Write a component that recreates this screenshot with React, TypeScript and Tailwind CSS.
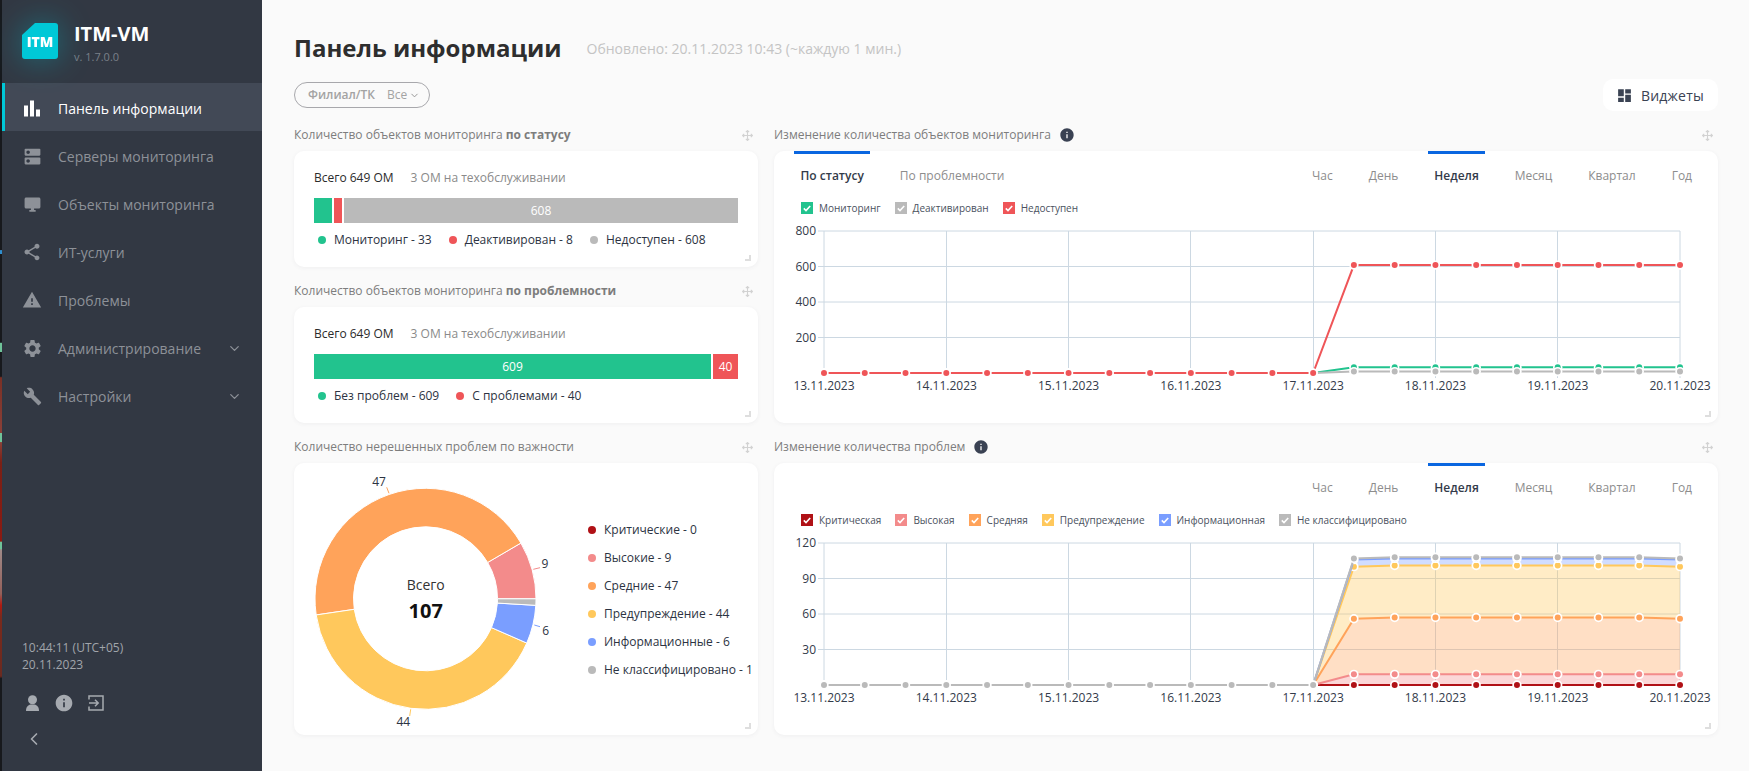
import React from 'react';
import { ChevronDown, ChevronLeft } from 'lucide-react';
import {
  MdBarChart,
  MdBuild,
  MdDashboard,
  MdDesktopWindows,
  MdDns,
  MdInfo,
  MdSettings,
  MdShare,
  MdWarning
} from 'react-icons/md';

const GREEN = '#22c38e';
const RED = '#ef5558';
const GRAY = '#bababa';
const DARK_RED = '#b01116';
const PINK = '#f38b8b';
const ORANGE = '#ffa35a';
const YELLOW = '#ffc85c';
const BLUE = '#7a9eff';

const NAV = [
  { label: 'Панель информации', icon: MdBarChart, size: 27, active: true },
  { label: 'Серверы мониторинга', icon: MdDns, size: 21 },
  { label: 'Объекты мониторинга', icon: MdDesktopWindows, size: 19 },
  { label: 'ИТ-услуги', icon: MdShare, size: 20 },
  { label: 'Проблемы', icon: MdWarning, size: 20 },
  { label: 'Администрирование', icon: MdSettings, size: 21, arrow: true },
  { label: 'Настройки', icon: MdBuild, size: 19, arrow: true }
];

const PERIODS = ['Час', 'День', 'Неделя', 'Месяц', 'Квартал', 'Год'];
const DATES = ['13.11.2023', '14.11.2023', '15.11.2023', '16.11.2023', '17.11.2023', '18.11.2023', '19.11.2023', '20.11.2023'];
const GRID_X = [824, 946.5, 1068.5, 1190.5, 1313.5, 1435.5, 1557.5, 1680];
const GRID_Y = [231, 266.5, 302, 337.5, 373];

const px = (i: number) => 824 + i * 40.762;

// 13 нулей до 17.11, дальше значения
const flat = (v: number) => [...Array(13).fill(0), ...Array(9).fill(v)] as number[];
const arc = (v: number, mid: number) => [...Array(13).fill(0), v, ...Array(7).fill(mid), v] as number[];

function MoveIcon() {
  return (
    <svg width="11" height="11" viewBox="0 0 10 10" fill="none" stroke="#d2d2d2" strokeWidth="1">
      <path d="M5 0.5v9M0.5 5h9M3.5 2 5 0.5 6.5 2M3.5 8 5 9.5 6.5 8M2 3.5 0.5 5 2 6.5M8 3.5 9.5 5 8 6.5" />
    </svg>);

}

function Widget({
  title,
  info,
  className,
  bodyClass,
  children
}: {
  title: React.ReactNode;
  info?: boolean;
  className?: string;
  bodyClass: string;
  children: React.ReactNode;
}) {
  return (
    <div className={className}>
      <div className="h-[24px] mb-[4px] flex items-center justify-between pr-[5px]">
        <div className="flex items-center text-[12px] text-[#7d7d7d]">
          <span>{title}</span>
          {info && <MdInfo className="ml-[8px] text-[#3a4253]" size={16} />}
        </div>
        <MoveIcon />
      </div>
      <div className={`relative bg-white rounded-[10px] shadow-[0_1px_4px_rgba(60,70,90,0.06)] ${bodyClass}`}>
        {children}
        <div className="absolute right-[7px] bottom-[6px] w-[6px] h-[6px] border-r-2 border-b-2 border-[#dedede]" />
      </div>
    </div>);

}

function StatBar({
  segments,
  legend
}: {
  segments: { w: string; color: string; label?: string }[];
  legend: { text: string; color: string }[];
}) {
  return (
    <div className="px-[20px] pt-[17px]">
      <div className="h-[20px] flex items-center text-[12px] gap-[17px]">
        <span className="text-[#2b2b2b]">Всего 649 ОМ</span>
        <span className="text-[#8a8a8a]">3 ОМ на техобслуживании</span>
      </div>
      <div className="mt-[10px] h-[25px] flex gap-[2px] text-[12px] text-white">
        {segments.map((s, i) =>
        <div key={i} className={`${s.w} h-full flex items-center justify-center`} style={{ background: s.color }}>
            {s.label}
          </div>
        )}
      </div>
      <div className="mt-[8px] pl-[4px] h-[18px] flex items-center gap-[17px] text-[12px] text-[#2c3342]">
        {legend.map((l) =>
        <div key={l.text} className="flex items-center gap-[8px]">
            <span className="w-[8px] h-[8px] rounded-full" style={{ background: l.color }} />
            <span>{l.text}</span>
          </div>
        )}
      </div>
    </div>);

}

function Tabs({ left }: { left?: boolean }) {
  return (
    <div className="h-[48px] pl-[20px] pr-[19px] flex justify-between text-[12px] text-[#8d8d8d]">
      <div className="flex gap-[23px]">
        {left &&
        <>
            <div className="h-full px-[6.5px] border-t-[3px] border-[#0a66e0] pt-[13px] font-semibold text-[#333b4a]">По статусу</div>
            <div className="h-full px-[6.5px] pt-[16px]">По проблемности</div>
          </>
        }
      </div>
      <div className="flex gap-[22px]">
        {PERIODS.map((p) =>
        <div
          key={p}
          className={
          p === 'Неделя' ?
          'h-full mx-[1px] px-[6px] border-t-[3px] border-[#0a66e0] pt-[13px] font-semibold text-[#333b4a]' :
          'h-full px-[7px] pt-[16px]'
          }>
            {p}
          </div>
        )}
      </div>
    </div>);

}

function ChartLegend({ items }: { items: { label: string; color: string }[] }) {
  return (
    <div className="h-[18px] pl-[27px] flex items-center gap-[14px] text-[10px] text-[#4a5160]">
      {items.map((it) =>
      <div key={it.label} className="flex items-center gap-[6px]">
          <span className="w-[12px] h-[12px] flex items-center justify-center" style={{ background: it.color }}>
            <svg width="8" height="7" viewBox="0 0 8 7" fill="none" stroke="#fff" strokeWidth="1.6">
              <path d="M0.8 3.4 3 5.6 7.2 1" />
            </svg>
          </span>
          <span>{it.label}</span>
        </div>
      )}
    </div>);

}

function Dots({ values, color, y }: { values: number[]; color: string; y: (v: number) => number }) {
  return (
    <>
      {values.map((v, i) =>
      <g key={i}>
          <circle cx={px(i)} cy={y(v)} r="4.7" fill="#fff" />
          <circle cx={px(i)} cy={y(v)} r="3" fill={color} />
        </g>
      )}
    </>);

}

function Line({ values, color, y }: { values: number[]; color: string; y: (v: number) => number }) {
  return (
    <polyline
      points={values.map((v, i) => `${px(i)},${y(v)}`).join(' ')}
      fill="none"
      stroke={color}
      strokeWidth="2" />);


}

function ChartSvg({
  ticks,
  max,
  series,
  stacked
}: {
  ticks: string[];
  max: number;
  series: { values: number[]; color: string }[];
  stacked?: boolean;
}) {
  const y = (v: number) => 373 - (v / max) * 142;
  return (
    <svg className="block" width="944" height="190" viewBox="774 217 944 190" style={{ fontFamily: '"Open Sans", sans-serif' }}>
      {GRID_Y.slice(0, 4).map((g) =>
      <g key={g}>
          <line x1="818" x2="1680" y1={g} y2={g} stroke="#ccd8e2" />
        </g>
      )}
      {GRID_X.map((g) =>
      <line key={g} x1={g} x2={g} y1="231" y2="378" stroke="#ccd8e2" />
      )}
      {ticks.map((t, i) =>
      <text key={t} x="816" y={GRID_Y[i] + 4} textAnchor="end" fontSize="12" fill="#333b4a">
          {t}
        </text>
      )}
      {DATES.map((d, i) =>
      <text key={d} x={824 + i * 122.29} y="390" textAnchor="middle" fontSize="12" fill="#333b4a">
          {d}
        </text>
      )}
      {stacked &&
      series.slice(1).map((s, k) => {
        const prev = series[k].values;
        const top = s.values.slice(12).map((v, i) => `${px(i + 12)},${y(v)}`);
        const bottom = prev.slice(12).map((v, i) => `${px(i + 12)},${y(v)}`).reverse();
        return <polygon key={k} points={[...top, ...bottom].join(' ')} fill={s.color} opacity="0.35" />;
      })}
      {series.map((s) =>
      <g key={s.color}>
          <Line values={s.values} color={s.color} y={y} />
          <Dots values={s.values} color={s.color} y={y} />
        </g>
      )}
    </svg>);

}

function polar(r: number, deg: number) {
  const a = (deg * Math.PI) / 180;
  return `${425.5 + r * Math.cos(a)} ${598.8 - r * Math.sin(a)}`;
}

function slice(from: number, to: number) {
  const large = to - from > 180 ? 1 : 0;
  return `M${polar(110.5, from)} A110.5 110.5 0 ${large} 0 ${polar(110.5, to)} L${polar(72, to)} A72 72 0 ${large} 1 ${polar(72, from)} Z`;
}

const SLICES = [
  { from: 0, to: 30.3, color: PINK },
  { from: 30.3, to: 188.4, color: ORANGE },
  { from: 188.4, to: 336.4, color: YELLOW },
  { from: 336.4, to: 356.6, color: BLUE },
  { from: 356.6, to: 360, color: GRAY }
];

const DONUT_LABELS = [
  { text: '9', x: 545, y: 568, color: PINK, line: [533.3, 569.3, 540, 567.7] },
  { text: '47', x: 379, y: 486, color: ORANGE, line: [386.7, 487.3, 389, 493.3] },
  { text: '44', x: 403.3, y: 726, color: YELLOW, line: [410.7, 709.3, 409.7, 716] },
  { text: '6', x: 545.7, y: 635, color: BLUE, line: [534.3, 625, 540, 626.7] }
];

const DONUT_LEGEND = [
  { text: 'Критические - 0', color: DARK_RED },
  { text: 'Высокие - 9', color: PINK },
  { text: 'Средние - 47', color: ORANGE },
  { text: 'Предупреждение - 44', color: YELLOW },
  { text: 'Информационные - 6', color: BLUE },
  { text: 'Не классифицировано - 1', color: GRAY }
];

function Donut() {
  return (
    <div className="flex items-center h-full">
      <svg className="block shrink-0" width="294" height="272" viewBox="294 463 294 272" style={{ fontFamily: '"Open Sans", sans-serif' }}>
        {SLICES.map((s) =>
        <path key={s.color} d={slice(s.from, s.to)} fill={s.color} stroke="#fff" strokeWidth="1" />
        )}
        {DONUT_LABELS.map((l) =>
        <g key={l.text}>
            <line x1={l.line[0]} y1={l.line[1]} x2={l.line[2]} y2={l.line[3]} stroke={l.color} />
            <text x={l.x} y={l.y} textAnchor="middle" fontSize="12" fill="#2c3342">
              {l.text}
            </text>
          </g>
        )}
        <text x="425.7" y="590" textAnchor="middle" fontSize="14" fill="#333">Всего</text>
        <text x="425.7" y="618" textAnchor="middle" fontSize="20" fontWeight="700" fill="#111">107</text>
      </svg>
      <div className="mt-[2px] flex flex-col text-[12px] text-[#2c3342]">
        {DONUT_LEGEND.map((l) =>
        <div key={l.text} className="h-[28px] flex items-center gap-[8px] whitespace-nowrap">
            <span className="w-[8px] h-[8px] rounded-full" style={{ background: l.color }} />
            <span>{l.text}</span>
          </div>
        )}
      </div>
    </div>);

}

function Sidebar() {
  return (
    <aside className="w-[260px] shrink-0 h-full bg-[#323843] flex flex-col">
      <div className="h-[83px] pl-[20px] pt-[23px] flex">
        <svg className="drop-shadow-[0_0_16px_rgba(0,200,215,0.4)]" width="36" height="36" viewBox="0 0 36 36">
          <path d="M13 0H33a3 3 0 0 1 3 3V33a3 3 0 0 1-3 3H3a3 3 0 0 1-3-3V12Z" fill="#00c8d7" />
          <text x="18" y="24" textAnchor="middle" fontSize="14" fontWeight="800" fill="#fff">ITM</text>
        </svg>
        <div className="ml-[16px] -mt-[1px]">
          <div className="text-[20px] leading-[24px] font-bold text-white">ITM-VM</div>
          <div className="text-[11px] leading-[15px] mt-[3px] text-[#7b8089]">v. 1.7.0.0</div>
        </div>
      </div>
      <nav>
        {NAV.map((item) => {
          const Icon = item.icon;
          return (
            <div
              key={item.label}
              className={`h-[48px] pt-[2px] flex items-center text-[14px] border-l-[3px] ${
              item.active ? 'bg-[#424956] border-[#00c8d7] text-white' : 'border-transparent text-[#8d9198]'}`
              }>
              <span className="ml-[15px] w-[24px] flex items-center justify-center shrink-0">
                <Icon size={item.size} />
              </span>
              <span className="ml-[14px] flex-1">{item.label}</span>
              {item.arrow && <ChevronDown className="mr-[20px]" size={15} strokeWidth={2} />}
            </div>);

        })}
      </nav>
      <div className="mt-auto pl-[20px] pb-[22px] text-[#a1a5ab]">
        <div className="text-[12px] leading-[17px]">
          <div>10:44:11 (UTC+05)</div>
          <div>20.11.2023</div>
        </div>
        <div className="mt-[19px] h-[22px] flex items-center text-[#a6aab0]">
          <svg className="ml-[4px]" width="13" height="16" viewBox="0 0 13 16" fill="currentColor">
            <circle cx="6.5" cy="4.7" r="4.5" />
            <path d="M0 16c0-4 2-6 4.5-6.5h4c2.5.5 4.5 2.5 4.5 6.5Z" />
          </svg>
          <MdInfo className="ml-[14.5px]" size={20} />
          <svg className="ml-[14.5px]" width="16" height="16" viewBox="0 0 16 16" fill="none" stroke="currentColor" strokeWidth="1.5">
            <path d="M1 4.5V1h14v14H1v-3.5M1 8h9M7 4.8 10.2 8 7 11.2" />
          </svg>
        </div>
        <ChevronLeft className="mt-[15px] ml-[2px] text-[#a6aab0]" size={20} strokeWidth={2} />
      </div>
    </aside>);

}

export default function App() {
  const status = [
    { values: flat(33), color: GREEN },
    { values: flat(8), color: GRAY },
    { values: flat(608), color: RED }
  ];
  const problems = [
    { values: flat(0), color: DARK_RED },
    { values: flat(9), color: PINK },
    { values: arc(56, 57), color: ORANGE },
    { values: arc(100, 101), color: YELLOW },
    { values: arc(106, 107), color: BLUE },
    { values: arc(107, 108), color: GRAY }
  ];
  return (
    <div className="flex w-full h-screen overflow-hidden bg-[#fafafa]" style={{ fontFamily: '"Open Sans", sans-serif' }}>
      <div className="w-[2px] shrink-0 bg-[linear-gradient(to_bottom,#17191d_0%,#17191d_32.4%,#2f8fd0_32.5%,#2f8fd0_32.9%,#17191d_33%,#17191d_44.4%,#6fc39a_44.5%,#6fc39a_45.6%,#17191d_45.7%,#17191d_48.8%,#7a3025_49%,#8a4038_56.1%,#6fc39a_56.2%,#6fc39a_57.3%,#8a4038_57.4%,#7a2015_60%,#8b1a12_70.2%,#6fc39a_70.3%,#6fc39a_71.2%,#a08a88_71.3%,#94605a_77%,#b01a10_78.5%,#7a2a1c_80%,#6b2a20_87.7%,#17191d_88%)]" />
      <Sidebar />
      <main className="flex-1 pl-[32px] pr-[31px] pt-[28px]">
        <div className="h-[40px] flex items-center gap-[25px]">
          <h1 className="text-[24px] font-bold text-[#2e2e2e]">Панель информации</h1>
          <span className="text-[14px] text-[#c4c4c4]">Обновлено: 20.11.2023 10:43 (~каждую 1 мин.)</span>
        </div>
        <div className="mt-[11px] h-[32px] flex items-center justify-between">
          <div className="h-[26px] w-[136px] pl-[13px] border border-[#a8a8ac] rounded-full flex items-center text-[12px] text-[#a3a3a3]">
            <span className="font-semibold">Филиал/ТК</span>
            <span className="ml-[12px]">Все</span>
            <ChevronDown className="ml-[2px] text-[#8f8f8f]" size={11} />
          </div>
          <div className="w-[115px] h-[32px] bg-white rounded-[10px] flex items-center pl-[13px] text-[14px] tracking-[0.2px] text-[#3a4253]">
            <MdDashboard size={17} />
            <span className="ml-[8px]">Виджеты</span>
          </div>
        </div>
        <div className="mt-[12px] flex gap-[16px]">
          <div className="w-[464px] flex flex-col gap-[12px]">
            <Widget
              title={<>Количество объектов мониторинга <b>по статусу</b></>}
              bodyClass="h-[116px]">
              <StatBar
                segments={[
                { w: 'w-[18px]', color: GREEN },
                { w: 'w-[8px]', color: RED },
                { w: 'flex-1', color: GRAY, label: '608' }]
                }
                legend={[
                { text: 'Мониторинг - 33', color: GREEN },
                { text: 'Деактивирован - 8', color: RED },
                { text: 'Недоступен - 608', color: GRAY }]
                } />
            </Widget>
            <Widget
              title={<>Количество объектов мониторинга <b>по проблемности</b></>}
              bodyClass="h-[116px]">
              <StatBar
                segments={[
                { w: 'flex-1', color: GREEN, label: '609' },
                { w: 'w-[25px]', color: RED, label: '40' }]
                }
                legend={[
                { text: 'Без проблем - 609', color: GREEN },
                { text: 'С проблемами - 40', color: RED }]
                } />
            </Widget>
            <Widget title="Количество нерешенных проблем по важности" bodyClass="h-[272px]">
              <Donut />
            </Widget>
          </div>
          <div className="w-[944px] flex flex-col gap-[12px]">
            <Widget title="Изменение количества объектов мониторинга" info bodyClass="h-[272px]">
              <Tabs left />
              <ChartLegend
                items={[
                { label: 'Мониторинг', color: GREEN },
                { label: 'Деактивирован', color: GRAY },
                { label: 'Недоступен', color: RED }]
                } />
              <ChartSvg ticks={['800', '600', '400', '200']} max={800} series={status} />
            </Widget>
            <Widget title="Изменение количества проблем" info bodyClass="h-[272px]">
              <Tabs />
              <ChartLegend
                items={[
                { label: 'Критическая', color: DARK_RED },
                { label: 'Высокая', color: PINK },
                { label: 'Средняя', color: ORANGE },
                { label: 'Предупреждение', color: YELLOW },
                { label: 'Информационная', color: BLUE },
                { label: 'Не классифицировано', color: GRAY }]
                } />
              <ChartSvg ticks={['120', '90', '60', '30']} max={120} series={problems} stacked />
            </Widget>
          </div>
        </div>
      </main>
    </div>);

}
